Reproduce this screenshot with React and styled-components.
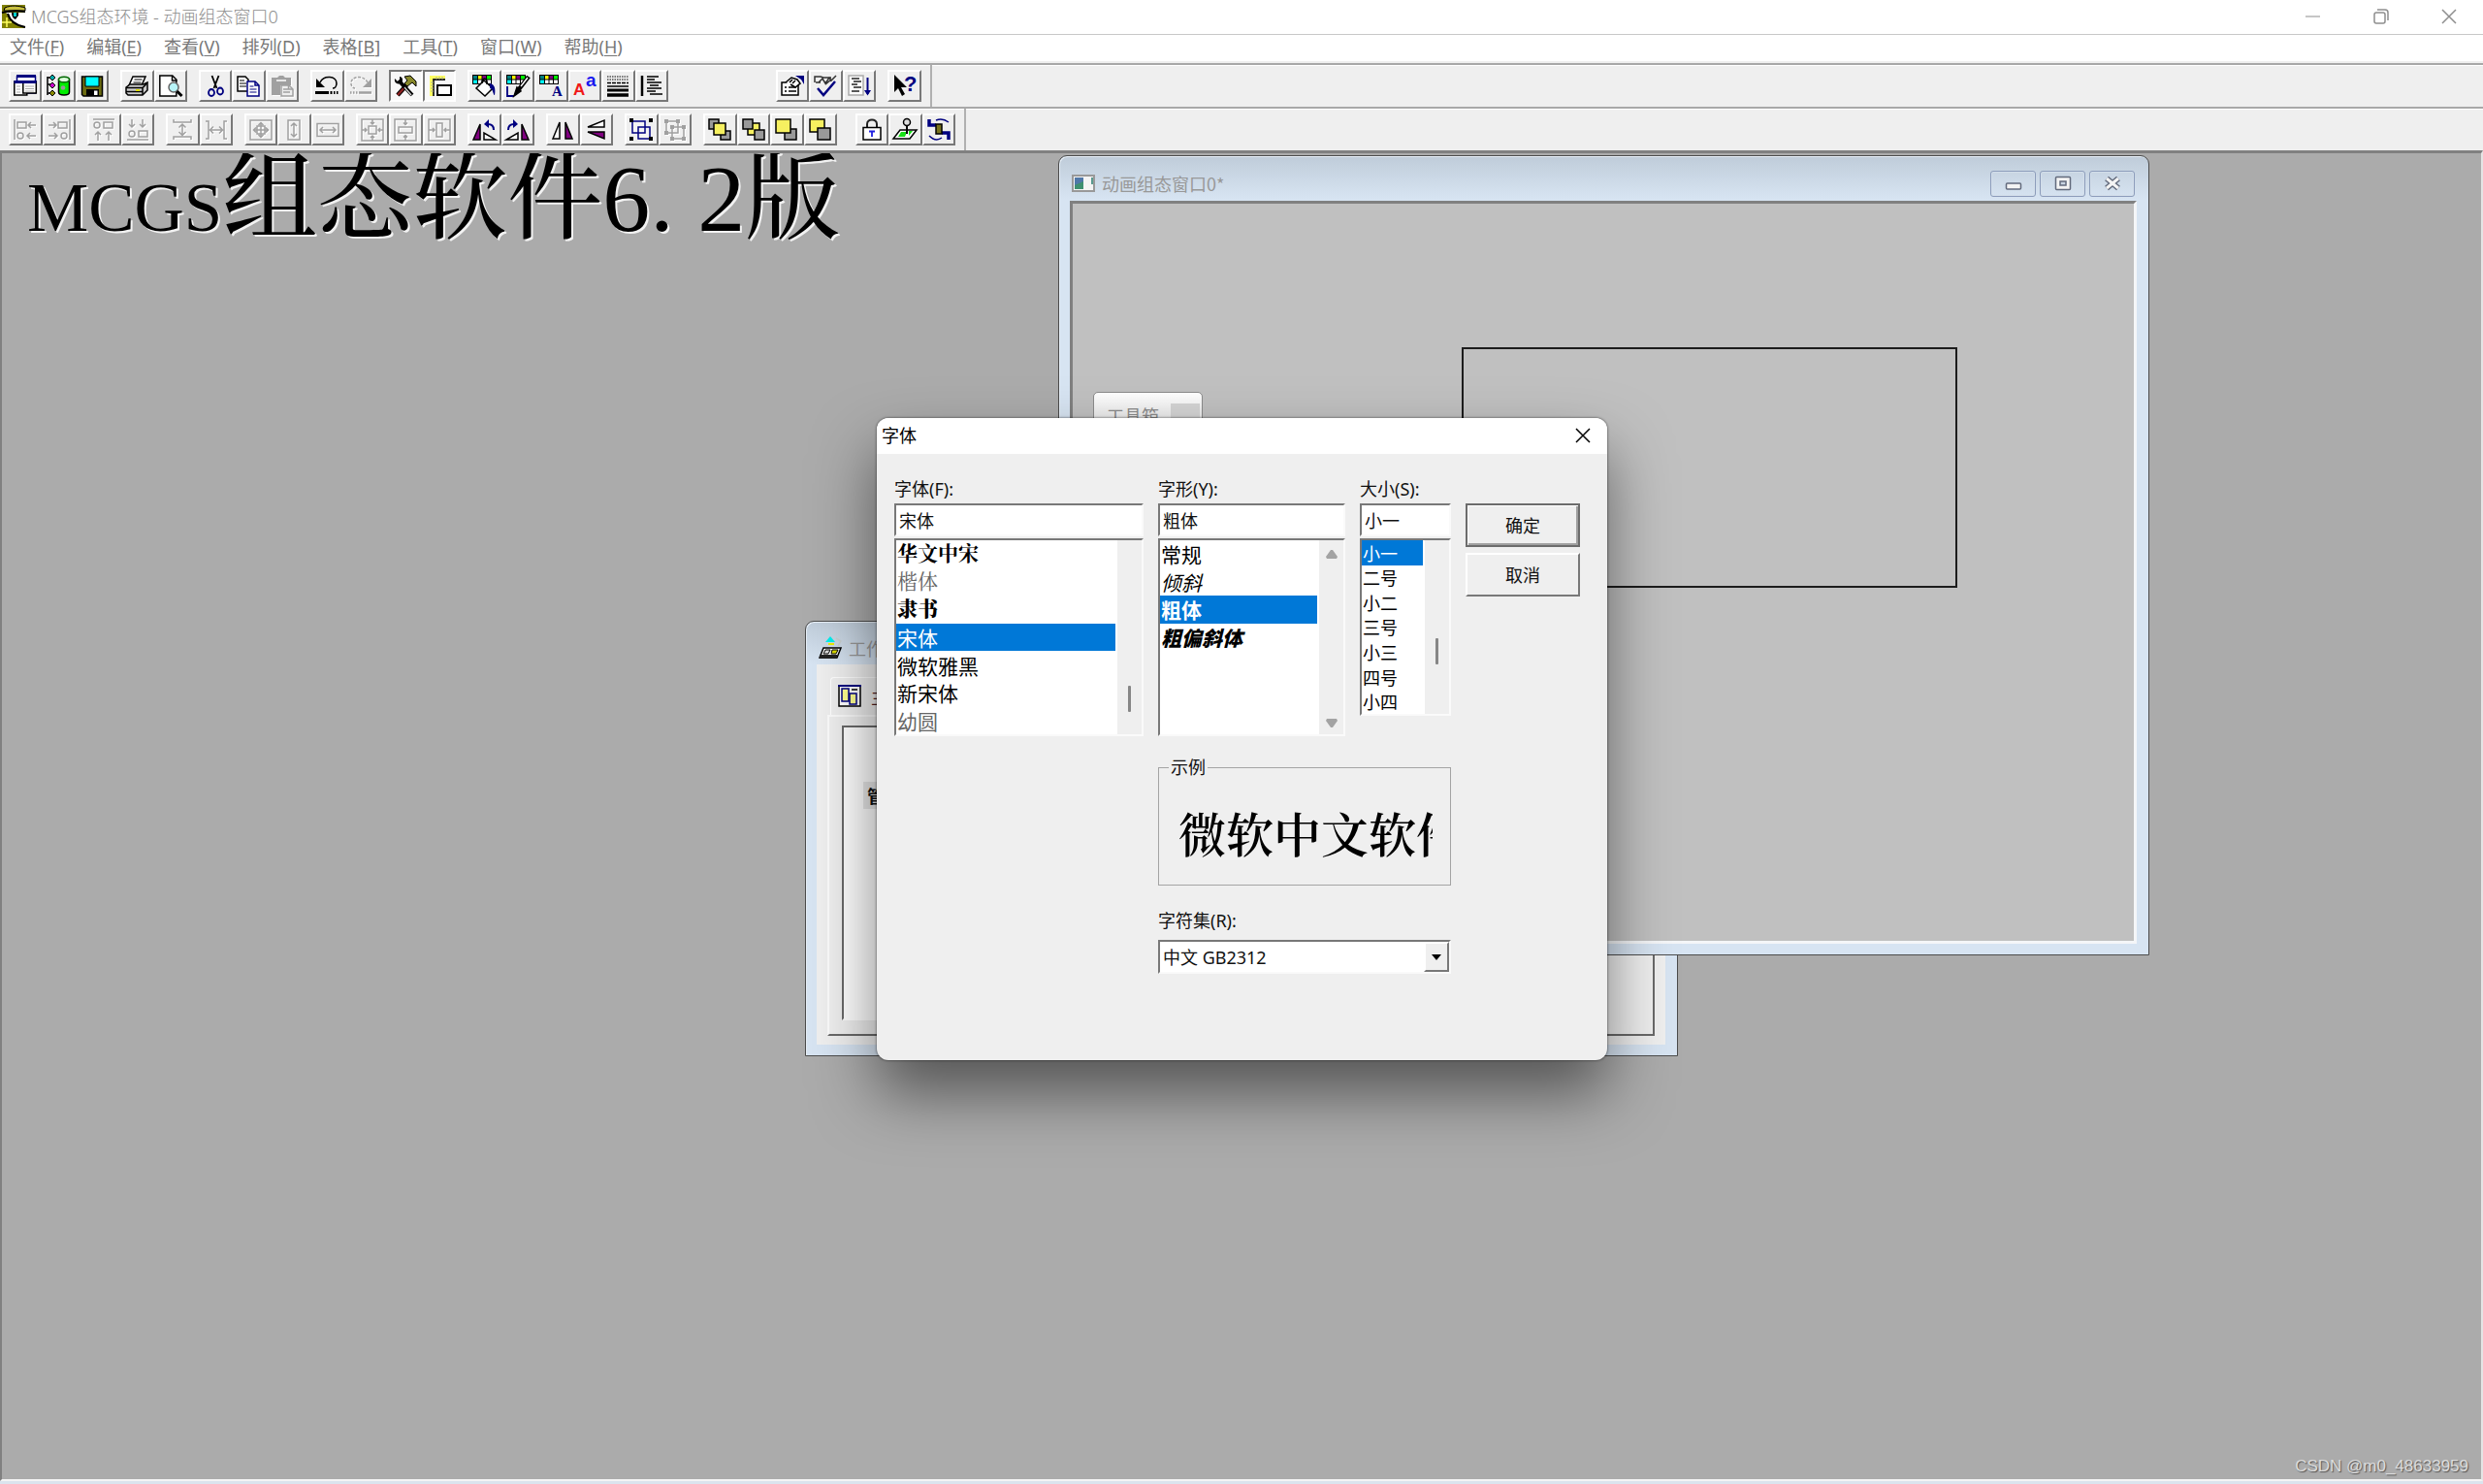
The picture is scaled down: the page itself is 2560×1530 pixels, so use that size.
import styled, { createGlobalStyle, css } from 'styled-components';

const uiFont = `'Noto Sans', 'Noto Sans CJK SC', sans-serif`;
const cjkFont = `'Noto Sans CJK SC', sans-serif`;
const songFont = `'Liberation Serif', 'Noto Serif CJK SC', 'Noto Sans CJK SC', serif`;

const colors = {
	face: '#efefef',
	desktop: '#ababab',
	shade: '#808080',
	dark: '#696969',
	accent: '#0078d7',
	frame: '#d7e4f2',
	muted: '#8e8e8e',
};

const GlobalStyle = createGlobalStyle`
	* {
		box-sizing: border-box;
	}

	body {
		margin: 0;
		font-family: ${uiFont};
		font-size: 18px;
		line-height: 24px;
		color: #111;
		overflow: hidden;
	}

	button, input, select {
		font: inherit;
		color: inherit;
		border-radius: 0;
	}

	ul {
		margin: 0;
		padding: 0;
		list-style: none;
	}

	svg {
		display: block;
		flex: none;
		overflow: visible;
	}
`;

const sunken = css`
	border: 2px solid;
	border-color: #787878 #fafafa #fafafa #787878;
`;

const raised = css`
	border: 2px solid;
	border-color: #fff #787878 #787878 #fff;
	background: ${colors.face};
`;

const Page = styled.div`
	display: flex;
	flex-direction: column;
	min-height: 100vh;
	background: ${colors.face};
`;

/* ---------- top of the main window ---------- */

const TitleBar = styled.header`
	display: flex;
	align-items: center;
	height: 36px;
	padding: 0 0 2px 2px;
	background: #fff;
	border-bottom: 1px solid #c8c8c8;
	color: ${colors.muted};
`;

const AppTitle = styled.h1`
	flex: 1;
	margin: 0 0 0 6px;
	font-size: 18px;
	font-weight: 300;
`;

const CaptionButton = styled.button`
	display: flex;
	align-items: center;
	justify-content: center;
	width: 70px;
	height: 33px;
	border: 0;
	padding: 0;
	background: none;
`;

const MenuBar = styled.nav`
	display: flex;
	align-items: center;
	gap: 23px;
	height: 29px;
	padding: 0 0 4px 10px;
	background: #fff;
	border-bottom: 2px solid ${colors.face};
`;

const MenuItem = styled.button`
	padding: 0;
	border: 0;
	background: none;
	color: #777;

	u {
		text-underline-offset: 2px;
	}
`;

const ToolbarRow = styled.div`
	display: flex;
	height: 45px;
	border-top: 2px solid #a8a8a8;
	box-shadow: inset 0 1px #fff;
`;

const Toolbar = styled.div`
	display: flex;
	align-items: center;
	gap: 12px;
	padding: 0 9px;
	border-right: 2px solid #b0b0b0;
`;

const groupWidths = { 1: 35, 2: 69, 3: 103, 4: 138, 6: 207 };

const Group = styled.div`
	display: grid;
	grid-template-columns: repeat(${(props) => props.$count}, 1fr);
	width: ${(props) => groupWidths[props.$count]}px;
	margin-left: ${(props) => props.$space || 0}px;
`;

const ToolButton = styled.button`
	display: flex;
	align-items: center;
	justify-content: center;
	height: 33px;
	padding: 0;
	${raised}

	${(props) =>
		props.$pressed &&
		`
		background: #f8f8f8;
		border-color: #787878 #fff #fff #787878;
	`}

	&:disabled svg {
		color: #a0a0a0;
		filter: drop-shadow(1px 1px 0 #fff);
	}
`;

/* ---------- desktop and inner windows ---------- */

const Desktop = styled.main`
	position: relative;
	flex: 1;
	background: ${colors.desktop};
	border-style: solid;
	border-width: 3px 2px 2px 2px;
	border-color: ${colors.shade} #e4e4e4 #f4f4f4 ${colors.shade};
	overflow: hidden;
`;

const BottomStrip = styled.footer`
	height: 3px;
	background: #dbe4ee;
`;

const Banner = styled.div`
	position: absolute;
	left: 26px;
	top: -2px;
	display: flex;
	align-items: baseline;
	font-family: ${songFont};
	font-size: 98px;
	line-height: 98px;
	font-weight: 500;
	color: #000;
	text-shadow: 2px 2px 0 #f2f2f2;
	white-space: nowrap;
`;

const BannerLatin = styled.span`
	font-size: 71px;
`;

const BannerDot = styled.span`
	width: 49px;
`;

const Window = styled.section`
	position: absolute;
	left: ${(props) => props.$x}px;
	top: ${(props) => props.$y}px;
	width: ${(props) => props.$w}px;
	height: ${(props) => props.$h}px;
	display: flex;
	flex-direction: column;
	padding: 0 12px 11px 11px;
	border: 1px solid #4c4c4c;
	border-radius: 9px 9px 0 0;
	background: linear-gradient(#bfccd9, ${colors.frame} 44px);
	box-shadow: inset 1px 1px #e8f0f8;
`;

const WindowTitle = styled.div`
	display: flex;
	align-items: center;
	height: ${(props) => props.$h}px;
	padding: 10px 2px 0;
	gap: 7px;
	color: #989898;
	white-space: nowrap;
	font-family: ${cjkFont};

	span {
		flex: 1;
	}
`;

const WindowButtons = styled.div`
	display: flex;
	gap: 4px;

	button {
		display: flex;
		align-items: center;
		justify-content: center;
		width: 47px;
		height: 27px;
		padding: 0;
		border: 1px solid #8d9dbb;
		border-radius: 3px;
		background: none;
		box-shadow: inset 0 0 0 1px #d3deea;
	}
`;

const Canvas = styled.div`
	flex: 1;
	position: relative;
	background: #c0c0c0;
	border-style: solid;
	border-width: 3px;
	border-color: ${colors.shade} #f4f6f8 #f4f6f8 ${colors.shade};
`;

const DrawnRect = styled.div`
	position: absolute;
	left: 401px;
	top: 148px;
	width: 511px;
	height: 248px;
	border: 2px solid #1c1c1c;
`;

const Toolbox = styled.aside`
	position: absolute;
	left: 1125px;
	top: 246px;
	width: 113px;
	height: 60px;
	display: flex;
	justify-content: space-between;
	padding: 11px 2px 0 13px;
	border: 1px solid #8c8c8c;
	border-radius: 5px 5px 0 0;
	background: linear-gradient(#fff, #e6e6e6 30px);
	color: #8a8a8a;
	font-family: ${cjkFont};
`;

const ToolboxClose = styled.button`
	width: 30px;
	height: 30px;
	padding: 0;
	border: 0;
	background: #d4d4d4;
`;

const Client = styled.div`
	flex: 1;
	display: flex;
	flex-direction: column;
	padding: 13px 11px 9px 11px;
	background: ${colors.face};
`;

const Tab = styled.button`
	display: flex;
	align-items: center;
	gap: 10px;
	width: 150px;
	height: 39px;
	margin-left: 3px;
	padding: 0 7px;
	border: 1px solid #fff;
	border-bottom: 0;
	border-radius: 4px 4px 0 0;
	background: none;
	font-family: ${cjkFont};
	color: #502020;
	white-space: nowrap;
`;

const TabPage = styled.div`
	flex: 1;
	display: flex;
	padding: 9px 100px 14px 13px;
	border: 2px solid;
	border-color: #fbfbfb ${colors.dark} ${colors.dark} #fbfbfb;
`;

const TabList = styled.div`
	flex: 1;
	padding: 56px 0 0 20px;
	border: 2px solid;
	border-color: ${colors.dark} #fff #fff ${colors.dark};
	background: #fff;
`;

const TabAction = styled.button`
	width: 100px;
	height: 28px;
	padding: 0 4px;
	border: 0;
	background: #e8e8e8;
	font-family: ${cjkFont};
	font-weight: 700;
	text-align: left;
`;

const Watermark = styled.div`
	position: absolute;
	right: 13px;
	bottom: 1px;
	font-family: 'Liberation Sans', sans-serif;
	font-size: 17px;
	color: #dcdcdc;
	text-shadow: 1px 1px 1px #555;
`;

/* ---------- font dialog ---------- */

const Dialog = styled.form`
	position: absolute;
	left: 902px;
	top: 273px;
	width: 753px;
	height: 662px;
	border-radius: 12px;
	background: ${colors.face};
	box-shadow: 0 0 2px 1px rgba(0, 0, 0, 0.3), 0 34px 64px rgba(0, 0, 0, 0.5);
	overflow: hidden;
`;

const DialogTitle = styled.div`
	display: flex;
	align-items: center;
	justify-content: space-between;
	height: 37px;
	padding: 0 0 2px 5px;
	background: #fff;
	color: #000;

	button {
		width: 50px;
	}
`;

const DialogBody = styled.div`
	display: grid;
	grid-template-columns: 257px 193px 94px 118px;
	column-gap: 15px;
	align-items: start;
	padding: 24px 0 0 18px;
`;

const Field = styled.div`
	display: flex;
	flex-direction: column;

	label {
		margin-bottom: 3px;
	}
`;

const TextBox = styled.input`
	width: 100%;
	height: 34px;
	margin-bottom: 2px;
	padding: 0 3px;
	background: #fff;
	outline: none;
	${sunken}
`;

const ListBox = styled.div`
	display: flex;
	height: ${(props) => props.$h}px;
	background: #fff;
	${sunken}
`;

const Options = styled.ul`
	flex: 1;
	display: grid;
	grid-template-rows: repeat(7, 1fr);
	margin-right: 2px;
	font-family: ${cjkFont};
	font-size: ${(props) => props.$size}px;
`;

const Option = styled.li`
	display: flex;
	align-items: center;
	padding-left: 1px;
	font-family: ${(props) => (props.$serif ? songFont : 'inherit')};
	font-weight: ${(props) => props.$weight || 400};
	font-style: ${(props) => (props.$italic ? 'italic' : 'normal')};
	color: ${(props) => (props.$faded ? '#666' : '#000')};
	white-space: nowrap;

	&[aria-selected='true'] {
		background: ${colors.accent};
		color: #fff;
	}
`;

const ScrollTrack = styled.div`
	display: flex;
	flex-direction: column;
	align-items: center;
	justify-content: ${(props) => (props.$arrows ? 'space-between' : 'flex-start')};
	width: 25px;
	padding: ${(props) => (props.$arrows ? '9px 0 6px' : `${props.$offset}px 0 0`)};
	background: ${colors.face};
`;

const Thumb = styled.div`
	width: 3px;
	height: 27px;
	border-radius: 1px;
	background: #868686;
`;

const Actions = styled.div`
	display: flex;
	flex-direction: column;
	gap: 6px;
	padding-top: 27px;
`;

const PushButton = styled.button`
	height: 45px;
	${raised}

	${(props) =>
		props.$primary &&
		`
		border: 2px solid #6c6c6c;
		box-shadow: inset 1px 1px #fff, inset -2px -2px #a0a0a0;
	`}
`;

const Sample = styled.fieldset`
	grid-column: 2 / 4;
	min-width: 0;
	height: 134px;
	margin: 20px 0 0;
	padding: 30px 18px 0 20px;
	border: 1px solid #a4a4a4;

	legend {
		margin-left: -10px;
		padding: 0 2px;
	}
`;

const SampleText = styled.p`
	margin: 0;
	font-family: ${songFont};
	font-size: 49px;
	line-height: 60px;
	font-weight: 600;
	color: #000;
	white-space: nowrap;
	overflow: hidden;
`;

const Charset = styled(Field)`
	grid-column: 2 / 4;
	margin-top: 24px;

	label {
		margin-bottom: 8px;
	}
`;

const Combo = styled.div`
	display: flex;
	height: 35px;
	background: #fff;
	${sunken}

	select {
		flex: 1;
		padding: 0 3px;
		border: 0;
		appearance: none;
		background: none;
		outline: none;
	}
`;

const ComboArrow = styled.span`
	display: flex;
	align-items: center;
	justify-content: center;
	width: 26px;
	${raised}
`;

/* ---------- icons ---------- */

const Icon = ({ children, size = 24, ...rest }) => (
	<svg
		width={size}
		height={size}
		viewBox="0 0 24 24"
		fill="none"
		stroke="currentColor"
		strokeWidth="1.5"
		aria-hidden="true"
		{...rest}
	>
		{children}
	</svg>
);

const Palette = () => (
	<>
		<path d="M0 0h20v10H0z" fill="#000" stroke="none" />
		<path d="M1 5.5h4V9H1z" fill="#0ff" stroke="none" />
		<path d="M1 1h4v3.5H1z" fill="#008080" stroke="none" />
		<path d="M6 1h3.5v3.5H6z" fill="#ff0" stroke="none" />
		<path d="M10.5 1H14v3.5h-3.5z" fill="#800080" stroke="none" />
		<path d="M15 1h4v3.5h-4z" fill="#0f0" stroke="none" />
		<path d="M6 5.5h3.5V9H6zM10.5 5.5H14V9h-3.5zM15 5.5h4V9h-4z" fill="#fff" stroke="none" />
	</>
);

const navy = '#000080';
const purple = '#800080';

const icons = {
	workspace: (
		<>
			<path d="M3.5 2h19v17h-19z" fill="#fff" stroke={navy} />
			<path d="M3 0h20v3H3z" fill={navy} stroke="none" />
			<path d="M.8 7h13v14H.8z" fill="#fff" stroke="#000" />
			<path d="M.5 6h13v3H.5z" fill={navy} stroke="none" />
			<path d="M9.8 7h13.500v12H9.8z" fill="#fff" stroke="#000" />
			<path d="M9 6h14.500v3H9z" fill={navy} stroke="none" />
			<path d="M12 12h9M12 14.500h9M12 17h9M3 12h4M3 15h4M3 18h4" stroke="#aaa" strokeWidth="1" />
		</>
	),
	database: (
		<>
			<path d="M1 2v19M1 10h5M1 19h5M1 3h4" stroke="#000" />
			<path d="M6 0l3 3-3 3-3-3z" fill="#0aa" stroke="#000" strokeWidth="1" />
			<path d="M6 8l3 3-3 3-3-3z" fill="#c0c" stroke="#000" strokeWidth="1" />
			<path d="M6 16l3 3-3 3-3-3z" fill="#880" stroke="#000" strokeWidth="1" />
			<path d="M12.500 5v13c0 4 11 4 11 0V5z" fill="#0e0" stroke="#000" />
			<ellipse cx="18" cy="5" rx="5.500" ry="2.800" fill="#dfd" stroke="#060" />
			<circle cx="17" cy="13.500" r="2.300" fill="#999" stroke="none" />
		</>
	),
	save: (
		<>
			<path d="M1.500 2h21v20H3l-1.500-1.500z" fill="#6b6b10" stroke="#000" />
			<path d="M5 2h14v10H5z" fill="#0ff" stroke="#000" strokeWidth="1" />
			<path d="M6 15h13v7H6z" fill="#000" stroke="none" />
			<path d="M14 16.500h3.500V21H14z" fill="#fff" stroke="none" />
		</>
	),
	print: (
		<>
			<path d="M8 2h13l-4 9H4z" fill="#fff" stroke="#000" />
			<path d="M9.500 5h8M8.500 8h8" stroke="#000" strokeWidth="1" />
			<path d="M1 13l4-3h14l4-2v8l-5 5H3l-2-2z" fill="#ccc" stroke="#000" />
			<path d="M1 13.500h17l4-4M18 14v7M1 17.500h17" stroke="#000" />
			<path d="M11 15h4v2h-4z" fill="#dd0" stroke="none" />
		</>
	),
	preview: (
		<>
			<path d="M.8 1h13l4 4v17H.8z" fill="#fff" stroke="#000" />
			<path d="M13.500 1v5h5" stroke="#000" />
			<circle cx="15" cy="13" r="5" fill="#b8f4f8" stroke="#666" />
			<path d="M18.500 17l5 5" stroke="#000" strokeWidth="3" />
		</>
	),
	cut: (
		<>
			<path d="M8.500 1l5 13M15.500 1l-5 13" stroke="#000" strokeWidth="1.800" />
			<ellipse cx="8" cy="18.500" rx="3" ry="3.500" stroke={navy} strokeWidth="1.800" />
			<ellipse cx="17" cy="17" rx="3" ry="3.500" stroke={navy} strokeWidth="1.800" />
		</>
	),
	copy: (
		<>
			<path d="M1 2h8l3 3v12H1z" fill="#fff" stroke="#000" />
			<path d="M3 6h5M3 9h7M3 12h7" stroke="#000" strokeWidth="1.200" />
			<path d="M11 7h8l4 4v11H11z" fill="#fff" stroke={navy} />
			<path d="M19 7v4h4" stroke={navy} />
			<path d="M13.500 12h4M13.500 15h7M13.500 18h7" stroke={navy} strokeWidth="1.200" />
		</>
	),
	paste: (
		<>
			<path d="M1 3h6l2-2h4l2 2h6v8H10v10H1z" fill="currentColor" stroke="none" />
			<path d="M6 6h10" stroke="#fff" />
			<path d="M11 11h8l4 4v7H11z" fill="#eee" />
			<path d="M13 15h5M13 18h7M18.500 11v4H23" />
		</>
	),
	undo: (
		<>
			<path d="M5 8c4-8 17-7 17 1 0 3-2 5-4 5" strokeWidth="1.600" stroke="#000" />
			<path d="M1 4v9h9z" fill="#000" stroke="none" />
			<path d="M0 18.500h14M15.500 18.500h2M19 18.500h1.500M22 18.500h1.500" strokeWidth="3" stroke="#000" />
		</>
	),
	redo: (
		<>
			<path d="M19 8c-4-8-17-7-17 1 0 3 2 5 4 5" strokeDasharray="3 1.500" />
			<path d="M23 4v9h-9z" fill="currentColor" stroke="none" />
			<path d="M10 18.500h13M1 18.500h1.500M4 18.500h1.500M7 18.500h1.500" strokeWidth="2.500" />
		</>
	),
	tools: (
		<>
			<path d="M13 11l-9 10" stroke="#000" strokeWidth="4.500" />
			<path d="M13 11l-9 10" stroke="#8c2020" strokeWidth="2.500" />
			<path d="M5 6l14 15" stroke="#000" strokeWidth="4" />
			<path d="M11 13l7 8" stroke="#ddd" strokeWidth="1.200" />
			<path d="M1 4c-1 5 4 7 7 4 2-2 1-6-2-6v3L4 7z" fill="#000" stroke="none" />
			<path d="M11 2l6-1 6 6v5l-4-4-5 4-3-3 3-3z" fill="#87872a" stroke="#000" strokeWidth="1" />
		</>
	),
	ruler: (
		<>
			<path d="M2 1h16v4H6v17H2z" fill="#ffff60" stroke="none" />
			<path d="M18 5H6v17" stroke="#222" strokeWidth="1.800" />
			<path d="M3 8h3M3 11h3M3 14h3M3 17h3M9 2v3M12 2v3M15 2v3" stroke="#aa8" strokeWidth="1" />
			<path d="M10 11h14v10H10z" fill="#fff" stroke="#000" strokeWidth="2" />
		</>
	),
	fill: (
		<>
			<Palette />
			<path d="M12 6l9 8-8 8-9-8z" fill="#fff" stroke="#000" />
			<path d="M10 9c0-7 6-6 5 1" stroke="#000" />
			<path d="M18 9c5 1 6 5 5 12-2 0-1-6-5-7z" fill={navy} stroke="none" />
		</>
	),
	pen: (
		<>
			<Palette />
			<path d="M1 12v10h7" stroke={navy} strokeWidth="1.800" />
			<path d="M23 2L13 15" stroke="#000" strokeWidth="4.500" />
			<path d="M22 3L15 12" stroke="#fff" strokeWidth="1.500" />
			<path d="M11 13l4 4-7 5z" fill="#000" stroke="#000" />
		</>
	),
	fontColor: (
		<>
			<Palette />
			<text x="13" y="22" fontFamily="Liberation Serif" fontSize="15" fontWeight="700" fill={navy} stroke="none">A</text>
		</>
	),
	font: (
		<>
			<text x="0" y="21" fontFamily="Liberation Sans" fontSize="17" fontWeight="700" fill="#f01818" stroke="none">A</text>
			<text x="13" y="12" fontFamily="Liberation Sans" fontSize="19" fontWeight="700" fill="#1818f0" stroke="none">a</text>
		</>
	),
	lineStyle: (
		<>
			<path d="M1 2h22M1 5h22" stroke="#000" strokeDasharray="1.500 1" strokeWidth="1" />
			<path d="M1 8.500h22" stroke="#000" strokeDasharray="4 1" />
			<path d="M1 12h22" stroke="#000" strokeWidth="1.500" />
			<path d="M1 16h22" stroke="#000" strokeWidth="3" />
			<path d="M1 21h22" stroke="#000" strokeWidth="3.500" />
		</>
	),
	spacing: (
		<>
			<path d="M2 1v21" stroke="#000" strokeWidth="2.500" />
			<path d="M7 2h12M7 5h8M7 8h15M10 11h9M7 14h15M7 17h9M10 20h13" stroke="#000" strokeWidth="1.500" />
		</>
	),
	properties: (
		<>
			<path d="M1 8h17v13H1z" fill="#fff" stroke="#000" />
			<path d="M4 13h2M8 13h8M4 17h2M8 17h8" stroke="#000" />
			<path d="M5 8l6-5 6 2 3 4-5 4-5-3" fill="#fff" stroke="#000" />
			<path d="M9 8l3-3M12 9l3-3" stroke="#000" />
			<path d="M15 1h9v9l-3-5z" fill={navy} stroke="none" />
		</>
	),
	check: (
		<>
			<path d="M1 8V2h6l3 1h8M5 8l4-4 3 5 4-6 2 3 5-5M2 8h5M12 10l6-5" stroke="#333" />
			<path d="M4 14l6 7L22 7" stroke={navy} strokeWidth="2.500" />
		</>
	),
	sort: (
		<>
			<path d="M1 1h15v20H1z" fill="#fff" stroke="#aaa" />
			<path d="M4 4h8M6 7h8M4 10h6M6 13h8M4 17h8" stroke="#222" />
			<path d="M20.500 3v17" stroke={navy} strokeWidth="2" />
			<path d="M17 16h7l-3.500 5.500z" fill={navy} stroke="none" />
		</>
	),
	help: (
		<>
			<path d="M1 0v18l4-4 4 8 3-2-4-7h6z" fill="#000" stroke="none" />
			<text x="11" y="17" fontFamily="Liberation Sans" fontSize="22" fontWeight="700" fill={navy} stroke="none">?</text>
		</>
	),
	alignLeft: <path d="M1 1v21M4 4h9v6H4zM23 7h-8m3-3l-3 3 3 3M23 18h-9m3-3l-3 3 3 3M10 18a3 3 0 1 1-6 0 3 3 0 0 1 6 0z" />,
	alignRight: <path d="M23 1v21M11 4h9v6h-9zM1 7h8M6 4l3 3-3 3M1 18h9m-3-3l3 3-3 3M20 18a3 3 0 1 1-6 0 3 3 0 0 1 6 0z" />,
	alignTop: <path d="M1 1h22M8 7a3 3 0 1 1-6 0 3 3 0 0 1 6 0zM12 4h9v6h-9zM6 23v-9m-3 3l3-3 3 3M17 23v-9m-3 3l3-3 3 3" />,
	alignBottom: <path d="M1 22h22M9 16a3 3 0 1 1-6 0 3 3 0 0 1 6 0zM13 13h9v6h-9zM6 1v8M3 6l3 3 3-3M17 1v8m-3-3l3 3 3-3" />,
	spaceV: <path d="M3 1v3h18V1M3 22v-3h18v3M12 6v11M8.500 9.500L12 6l3.500 3.500M8.500 14l3.500 3.500 3.500-3.500" />,
	spaceH: <path d="M1 3h3v18H1M23 3h-3v18h3M6 12h12M9 8.500L5.500 12 9 15.500M15 8.500l3.500 3.500-3.500 3.500" />,
	sizeBoth: <path d="M1 2h22v20H1zM12 4v16M4 12h16M9.500 7L12 4.500 14.500 7M9.500 17l2.500 2.500 2.500-2.500M7 9.500L4.500 12 7 14.500M17 9.500l2.500 2.500-2.500 2.500M8 8h8v8H8z" />,
	sizeV: <path d="M6 2h12v20H6zM12 5v14M9 8l3-3 3 3M9 16l3 3 3-3" />,
	sizeH: <path d="M1 5.500h22v13H1zM4 12h16M7 9l-3 3 3 3M17 9l3 3-3 3" />,
	centerBoth: <path d="M1 1h22v22H1zM8 8h8v8H8zM12 1v5m-2-2l2 2 2-2M12 23v-5m-2 2l2-2 2 2M1 12h5m-2-2l2 2-2 2M23 12h-5m2-2l-2 2 2 2" />,
	centerV: <path d="M1 1h22v22H1zM5 9h14v6H5zM12 1v5.500m-2-2l2 2 2-2M12 23v-5.500m-2 2l2-2 2 2" />,
	centerH: <path d="M1 1h22v22H1zM9 5h6v14H9zM1 12h6m-2-2l2 2-2 2M23 12h-6m2-2l-2 2 2 2" />,
	rotateLeft: (
		<>
			<path d="M1 22L8 6v16z" fill={purple} stroke="#000" />
			<path d="M12 22V15l12 7z" fill="#fff" stroke="#000" />
			<path d="M22 12c0-4-2-6-6-6" stroke={navy} strokeWidth="2" />
			<path d="M17 1v9l-5-4z" fill={navy} stroke="none" />
		</>
	),
	rotateRight: (
		<>
			<path d="M23 22L16 6v16z" fill={purple} stroke="#000" />
			<path d="M12 22V15L0 22z" fill="#fff" stroke="#000" />
			<path d="M2 12c0-4 2-6 6-6" stroke={navy} strokeWidth="2" />
			<path d="M7 1v9l5-4z" fill={navy} stroke="none" />
		</>
	),
	flipH: (
		<>
			<path d="M2 21L9 4v17z" fill="#fff" stroke="#000" />
			<path d="M22 21L15 4v17z" fill={purple} stroke="#000" />
		</>
	),
	flipV: (
		<>
			<path d="M3 9L20 2v7z" fill="#fff" stroke="#000" />
			<path d="M3 14h17v7z" fill={purple} stroke="#000" />
		</>
	),
	group: (
		<>
			<path d="M3 3h13v12H3zM9 9h12v12H9z" fill="#f4f4f4" stroke={navy} strokeWidth="1.500" />
			<path d="M0 0h4v4H0zM20 0h4v4h-4zM0 19h4v4H0zM20 19h4v4h-4z" fill="#000" stroke="none" />
		</>
	),
	ungroup: (
		<>
			<path d="M3 3h12v12H3zM9 9h12v12H9z" />
			<path d="M1 1h4v4H1zM13 1h4v4h-4zM1 13h4v4H1zM7 7h4v4H7zM19 7h4v4h-4zM7 19h4v4H7zM19 19h4v4h-4z" fill="currentColor" stroke="none" />
		</>
	),
	bringFront: (
		<>
			<path d="M1 1h10v10H1zM13 13h10v9H13z" fill="#999" stroke="#000" />
			<path d="M6 5h12v12H6z" fill="#f6f060" stroke="#000" />
		</>
	),
	sendBack: (
		<>
			<path d="M6 5h12v12H6z" fill="#f6f060" stroke="#000" />
			<path d="M1 1h10v10H1zM13 12h10v10H13z" fill="#999" stroke="#000" />
		</>
	),
	forward: (
		<>
			<path d="M10 11h12v11H10z" fill="#999" stroke="#000" />
			<path d="M1 1h15v14H1z" fill="#f6f060" stroke="#000" />
		</>
	),
	backward: (
		<>
			<path d="M1 1h15v13H1z" fill="#f6f060" stroke="#000" />
			<path d="M9 10h13v12H9z" fill="#999" stroke="#000" />
		</>
	),
	lock: (
		<>
			<path d="M7 10V6c0-6 10-6 10 0v4" stroke="#222" strokeWidth="2" />
			<path d="M3 9.500h18V22H3z" fill="#fff" stroke="#000" strokeWidth="1.500" />
			<path d="M9 13.500h6M12 13v6" stroke="#2020e0" strokeWidth="1.800" />
		</>
	),
	pin: (
		<>
			<path d="M7 12h17l-7 9H0z" fill="#fff" stroke="#000" />
			<path d="M8 14h6l-2 5H5zM16 13h4l-4 5z" fill="#18e018" stroke="none" />
			<path d="M14 7v9" stroke="#000" strokeWidth="2" />
			<circle cx="14" cy="4" r="3.500" fill="#ddd" stroke="#000" />
		</>
	),
	refresh: (
		<>
			<path d="M9 2c5-2 9-1 13 2M2 18c4 4 9 5 13 2" stroke={navy} />
			<path d="M2 1v6h7M22 22v-7h-7" stroke={navy} strokeWidth="3.500" />
			<path d="M9 6h6v10H9z" fill="#77721c" stroke="#000" />
		</>
	),
};

const mainTools = [
	{ tools: ['workspace', 'database', 'save'] },
	{ tools: ['print', 'preview'] },
	{ tools: ['cut', 'copy', '-paste'] },
	{ tools: ['undo', '-redo'] },
	{ tools: ['+tools', '+ruler'] },
	{ tools: ['fill', 'pen', 'fontColor', 'font', 'lineStyle', 'spacing'] },
	{ tools: ['properties', 'check', 'sort'], space: 99 },
	{ tools: ['help'] },
];

const layoutTools = [
	{ tools: ['-alignLeft', '-alignRight'] },
	{ tools: ['-alignTop', '-alignBottom'] },
	{ tools: ['-spaceV', '-spaceH'] },
	{ tools: ['-sizeBoth', '-sizeV', '-sizeH'] },
	{ tools: ['-centerBoth', '-centerV', '-centerH'] },
	{ tools: ['rotateLeft', 'rotateRight'] },
	{ tools: ['flipH', 'flipV'] },
	{ tools: ['group', '-ungroup'] },
	{ tools: ['bringFront', 'sendBack', 'forward', 'backward'] },
	{ tools: ['lock', 'pin', 'refresh'], space: 7 },
];

const menus = [
	['文件', '(', 'F', ')'],
	['编辑', '(', 'E', ')'],
	['查看', '(', 'V', ')'],
	['排列', '(', 'D', ')'],
	['表格', '[', 'B', ']'],
	['工具', '(', 'T', ')'],
	['窗口', '(', 'W', ')'],
	['帮助', '(', 'H', ')'],
];

const fontOptions = [
	{ name: '华文中宋', weight: 700, serif: true },
	{ name: '楷体', faded: true, serif: true },
	{ name: '隶书', weight: 900, serif: true },
	{ name: '宋体' },
	{ name: '微软雅黑' },
	{ name: '新宋体' },
	{ name: '幼圆', faded: true },
];

const styleOptions = [
	{ name: '常规' },
	{ name: '倾斜', italic: true },
	{ name: '粗体', weight: 700 },
	{ name: '粗偏斜体', weight: 900, italic: true },
];

const sizeOptions = ['小一', '二号', '小二', '三号', '小三', '四号', '小四'].map((name) => ({ name }));

/* "-" marks a disabled tool, "+" a pressed one */
const ToolGroups = ({ groups }) => (
	<Toolbar role="toolbar">
		{groups.map(({ tools, space }) => (
			<Group key={tools[0]} $count={tools.length} $space={space}>
				{tools.map((tool) => {
					const name = tool.replace(/^[-+]/, '');
					return (
						<ToolButton
							key={name}
							type="button"
							aria-label={name}
							disabled={tool[0] === '-'}
							$pressed={tool[0] === '+'}
						>
							<Icon>{icons[name]}</Icon>
						</ToolButton>
					);
				})}
			</Group>
		))}
	</Toolbar>
);

const Triangle = ({ down }) => (
	<svg width="14" height="11" viewBox="0 0 14 11" aria-hidden="true">
		<path
			d={down ? 'M2 1h10l1 2-5 7H6L1 3z' : 'M2 10h10l1-2-5-7H6L1 8z'}
			fill="#a3a3a3"
		/>
	</svg>
);

const PickList = ({ id, label, value, options, height, size, offset, arrows }) => (
	<Field>
		<label htmlFor={id}>{label}</label>
		<TextBox id={id} defaultValue={value} />
		<ListBox $h={height}>
			<Options role="listbox" aria-label={label} $size={size}>
				{options.map((option) => (
					<Option
						key={option.name}
						role="option"
						aria-selected={option.name === value}
						$weight={option.weight}
						$italic={option.italic}
						$faded={option.faded}
						$serif={option.serif}
					>
						{option.name}
					</Option>
				))}
			</Options>
			<ScrollTrack $arrows={arrows} $offset={offset}>
				{arrows ? (
					<>
						<Triangle />
						<Triangle down />
					</>
				) : (
					<Thumb />
				)}
			</ScrollTrack>
		</ListBox>
	</Field>
);

const CloseGlyph = ({ color }) => (
	<svg width="16" height="16" viewBox="0 0 16 16" aria-hidden="true">
		<path d="M1 1l14 14M15 1L1 15" stroke={color} strokeWidth="1.500" />
	</svg>
);

const FontDialog = () => (
	<Dialog role="dialog" aria-label="字体">
		<DialogTitle>
			<span>字体</span>
			<CaptionButton type="button" aria-label="关闭">
				<CloseGlyph color="#000" />
			</CaptionButton>
		</DialogTitle>
		<DialogBody>
			<PickList id="font" label="字体(F):" value="宋体" options={fontOptions} height={204} size={21} offset={150} />
			<PickList id="style" label="字形(Y):" value="粗体" options={styleOptions} height={204} size={21} arrows />
			<PickList id="size" label="大小(S):" value="小一" options={sizeOptions} height={183} size={18} offset={101} />
			<Actions>
				<PushButton type="button" $primary>确定</PushButton>
				<PushButton type="button">取消</PushButton>
			</Actions>
			<Sample>
				<legend>示例</legend>
				<SampleText>微软中文软件</SampleText>
			</Sample>
			<Charset>
				<label htmlFor="charset">字符集(R):</label>
				<Combo>
					<select id="charset" defaultValue="gb2312">
						<option value="gb2312">中文 GB2312</option>
					</select>
					<ComboArrow>
						<svg width="10" height="6" viewBox="0 0 10 6" aria-hidden="true">
							<path d="M0 0h10L5 6z" fill="#000" />
						</svg>
					</ComboArrow>
				</Combo>
			</Charset>
		</DialogBody>
	</Dialog>
);

const WorkspaceWindow = () => (
	<Window $x={828} $y={482} $w={900} $h={449}>
		<WindowTitle $h={44}>
			<Icon>
				<path d="M5 12h18l-4 10H1z" fill="#fff" stroke="#000" />
				<path d="M1 19h18v4H1z" fill="#222" stroke="none" />
				<path d="M7 14h5l-2 4H5z" fill="#ddd" stroke="#000" strokeWidth="1" />
				<path d="M14 14h6l-2 4h-5z" fill="#dd0" stroke="#000" strokeWidth="1" />
				<path d="M12 0l5 6H7z" fill="#0ee" stroke="none" />
				<path d="M10 8h6" stroke="#ee0" strokeWidth="2" />
				<path d="M18 2l5 3-3 5" stroke="#c8d0d0" />
			</Icon>
			<span>工作台</span>
		</WindowTitle>
		<Client>
			<Tab type="button">
				<Icon>
					<path d="M1 1h22v21H1z" fill="#fff" stroke="#000" strokeWidth="1.500" />
					<path d="M0 1h24" stroke={navy} strokeWidth="2" />
					<path d="M4 4h7v13H4z" fill="#ffff90" stroke={navy} strokeWidth="1.500" />
					<path d="M12 9h7v11h-7z" fill="#ffff90" stroke={navy} strokeWidth="1.500" />
					<path d="M14 5h6" stroke="#000" />
				</Icon>
				主控窗口
			</Tab>
			<TabPage>
				<TabList>
					<TabAction type="button">管理</TabAction>
				</TabList>
			</TabPage>
		</Client>
	</Window>
);

const AnimationWindow = () => (
	<Window $x={1089} $y={2} $w={1125} $h={825}>
		<WindowTitle $h={46}>
			<svg width="24" height="18" viewBox="0 0 24 18" aria-hidden="true">
				<path d="M1 1h22v16H1z" fill="#f4f4f4" stroke="#999" strokeWidth="2" />
				<path d="M3 3h9v12H3z" fill="#3f9070" />
				<path d="M3 3h9v4L3 11z" fill="#5078a8" />
				<path d="M20 3h2v7h-2z" fill="#5a9a90" />
			</svg>
			<span>动画组态窗口0*</span>
			<WindowButtons>
				<button type="button" aria-label="最小化">
					<svg width="18" height="16" viewBox="0 0 18 16">
						<rect x="1.500" y="8" width="15" height="6" rx="1" fill="#f4f4f4" stroke="#626a7c" strokeWidth="1.500" />
					</svg>
				</button>
				<button type="button" aria-label="还原">
					<svg width="18" height="16" viewBox="0 0 18 16">
						<rect x="1.500" y="1.500" width="15" height="13" rx="1" fill="#f4f4f4" stroke="#626a7c" strokeWidth="1.500" />
						<rect x="6" y="6" width="6" height="4" fill="#c8d4e2" stroke="#626a7c" strokeWidth="1.500" />
					</svg>
				</button>
				<button type="button" aria-label="关闭">
					<svg width="18" height="16" viewBox="0 0 18 16">
						<path d="M3 3l12 10M15 3L3 13" stroke="#626a7c" strokeWidth="6" />
						<path d="M3 3l12 10M15 3L3 13" stroke="#f4f4f4" strokeWidth="3" />
					</svg>
				</button>
			</WindowButtons>
		</WindowTitle>
		<Canvas>
			<DrawnRect />
		</Canvas>
	</Window>
);

const App = () => {
	return (
		<Page>
			<GlobalStyle />
			<TitleBar>
				<Icon>
					<path d="M0 0h24v24H0z" fill="#808000" stroke="none" />
					<path d="M4 8h20v14c-9 0-15-5-18-12z" fill="#fff" stroke="none" />
					<path d="M3 3c7-3 14-2 21 0v3H2z" fill="#c8c040" stroke="#000" strokeWidth="1" />
					<path d="M0 8c8-2 16-2 24-1M6 9c2 7 7 12 18 14" stroke="#000" strokeWidth="2" />
					<path d="M10 8h7v3l-3 4c-3-1-4-4-4-7z" fill="#000" stroke="none" />
					<path d="M12 8h3v4h-3z" fill="#0cc" stroke="none" />
					<path d="M5 13v10M0 18h10" stroke="#ffff60" />
				</Icon>
				<AppTitle>MCGS组态环境 - 动画组态窗口0</AppTitle>
				<CaptionButton type="button" aria-label="最小化">
					<svg width="16" height="16" viewBox="0 0 16 16">
						<path d="M0 8h15" stroke="#8e8e8e" />
					</svg>
				</CaptionButton>
				<CaptionButton type="button" aria-label="还原">
					<svg width="16" height="16" viewBox="0 0 16 16" fill="none" stroke="#8e8e8e" strokeWidth="1.500">
						<rect x="1" y="4" width="11" height="11" rx="2" />
						<path d="M4 1h8a3 3 0 0 1 3 3v8" />
					</svg>
				</CaptionButton>
				<CaptionButton type="button" aria-label="关闭">
					<CloseGlyph color="#8e8e8e" />
				</CaptionButton>
			</TitleBar>
			<MenuBar>
				{menus.map(([label, open, key, close]) => (
					<MenuItem key={key} type="button">
						{label}
						{open}
						<u>{key}</u>
						{close}
					</MenuItem>
				))}
			</MenuBar>
			<ToolbarRow>
				<ToolGroups groups={mainTools} />
			</ToolbarRow>
			<ToolbarRow>
				<ToolGroups groups={layoutTools} />
			</ToolbarRow>
			<Desktop>
				<Banner>
					<BannerLatin>MCGS</BannerLatin>
					组态软件6<BannerDot>.</BannerDot>2版
				</Banner>
				<WorkspaceWindow />
				<AnimationWindow />
				<Toolbox>
					工具箱
					<ToolboxClose type="button" aria-label="关闭" />
				</Toolbox>
				<FontDialog />
				<Watermark>CSDN @m0_48633959</Watermark>
			</Desktop>
			<BottomStrip />
		</Page>
	);
};

export default App;
